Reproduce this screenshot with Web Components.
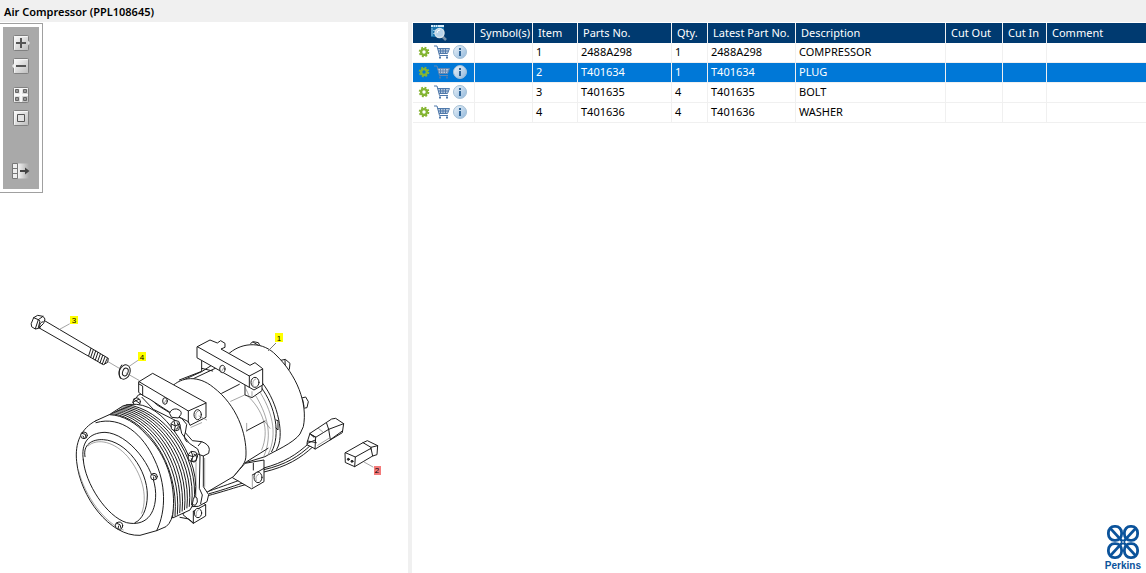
<!DOCTYPE html>
<html lang="en">
<head>
<meta charset="utf-8">
<title>Air Compressor (PPL108645)</title>
<style>
html, body { height: 100%; margin: 0; }
body { font: 11px/20px "Noto Sans", "Open Sans", sans-serif; color: #000; background: #fff; }
</style>
</head>
<body>
<catalog-page>
  <span slot="title">Air Compressor (PPL108645)</span>
  <illustration-pane slot="left"></illustration-pane>
  <parts-list slot="right"></parts-list>
  <brand-mark slot="brand">Perkins</brand-mark>
</catalog-page>
<script>
const define = (name, html, setup) => customElements.define(name, class extends HTMLElement {
  constructor() {
    super();
    this.attachShadow({ mode: 'open' }).innerHTML = html;
    if (setup) setup(this.shadowRoot, this);
  }
});

define('catalog-page', `
<style>
:host { display: flex; flex-direction: column; height: 100%; }
header { background: #f0f0f0; padding: 2px 4px 0; }
h1 { font-size: 11px; line-height: 20px; font-weight: 600; margin: 0; }
main { flex: 1; min-height: 0; display: grid; grid-template-columns: minmax(0, 408fr) 4px minmax(0, 734fr); }
.split { background: #f0f0f0; }
.right { display: flex; flex-direction: column; justify-content: space-between; padding: 1px 0 1px 1px; }
</style>
<header><h1><slot name="title"></slot></h1></header>
<main>
  <slot name="left"></slot>
  <div class="split"></div>
  <div class="right"><slot name="right"></slot><slot name="brand"></slot></div>
</main>`);

define('illustration-pane', `
<style>:host { display: flex; flex-direction: column; overflow: hidden; }</style>
<zoom-tools></zoom-tools>
<part-drawing></part-drawing>`);

const tile = '<rect x="2.500" y="1.500" width="15" height="15" rx="1" fill="url(#g)" stroke="#808080"/><path d="M3.500 15.500V2.500H16.500" fill="none" stroke="#f6f6f6"/>';
const tools = [
  ['Zoom in', tile + '<path d="M17 6.500l2 2.500-2 2.500z" fill="#e0e0e0"/><path d="M10 4v10M5 9h10" stroke="#555" stroke-width="2"/>'],
  ['Zoom out', tile + '<path d="M3 6.500L1 9l2 2.500z" fill="#e8e8e8"/><path d="M5 9h10" stroke="#555" stroke-width="2"/>'],
  ['Fit to window', tile + '<path d="M10 2v14M3 9h14" stroke="#f8f8f8" stroke-width="2"/><path d="M4.500 3.500h3v3h-3zM12.500 3.500h3v3h-3zM4.500 11.500h3v3h-3zM12.500 11.500h3v3h-3z" fill="#999" stroke="#666"/>'],
  ['Actual size', tile + '<path d="M6.500 5.500h7v7h-7z" fill="#e2e2e2" stroke="#555"/>'],
  ['Show list', '<path d="M7 1.500h11v15H7z" fill="url(#f)"/><path d="M1.500 1.500h5v15h-5z" fill="#eee" stroke="#777"/><path d="M2 6.500h5M2 11.500h5" stroke="#777"/><path d="M9 9h7" stroke="#444" stroke-width="2"/><path d="M14 5.500L18.500 9 14 12.500z" fill="#444"/>']
];
define('zoom-tools', `
<style>
:host { display: block; flex: none; box-sizing: border-box; width: 43px; border: 1px solid #a0a0a0; border-left: 0; margin-top: 1px; padding: 3px; background: #fff; }
nav { background: #a9a9a9; display: flex; flex-direction: column; align-items: center; gap: 5px; padding: 7px 0 8px; height: 147px; }
button { border: 0; padding: 0; background: none; width: 20px; height: 18px; display: block; }
button:nth-child(3) { margin-top: 6px; }
button:nth-child(5) { margin-top: 30px; }
svg { display: block; }
</style>
<nav>${tools.map(([n, p]) => `<button type="button" aria-label="${n}"><svg width="20" height="18" viewBox="0 0 20 18"><defs><linearGradient id="g" x2="1" y2="1"><stop stop-color="#fff"/><stop offset="1" stop-color="#bbb"/></linearGradient><linearGradient id="f"><stop stop-color="#f4f4f4"/><stop offset="1" stop-color="#a9a9a9"/></linearGradient></defs>${p}</svg></button>`).join('')}</nav>`);

define('part-drawing', `
<style>
:host { display: block; }
svg { display: block; width: 100%; height: auto; }
g { fill: #fff; stroke: #1c1c1c; stroke-width: 3; stroke-linejoin: round; stroke-linecap: round; }
.n { fill: none; } .l { fill: none; stroke: #777; stroke-width: 2; } .d { fill: #333; }
text { font: 8px "Liberation Sans", sans-serif; text-anchor: middle; fill: #000; }
</style>
<svg viewBox="0 193 408 380" role="img" aria-label="Air compressor exploded view">
  <!-- rear housing -->
  <g transform="translate(130 330) scale(.33333)">
    <path d="M362 40l8-5 15 3 5 10M448 92l18-4 14 12-2 18-12 5M512 205l15-4 8 14-4 18-12 2"/>
    <path d="M455 96l10 12M465 90l1 28M518 209l4 20M369 36l16 10"/>
    <path d="M300 68C340 35 400 35 438 75C500 135 534 220 520 290L510 312C490 340 430 365 405 380L340 400L300 300L160 150L215 125L270 90z"/>
    <path class="n" d="M398 160C445 220 465 320 440 358M392 170C438 230 452 315 425 365M438 270l6 2 0 28-6-6"/>
    <path class="l" d="M386 180C425 240 445 310 415 372M374 192C410 250 430 312 402 378M350 195C400 240 420 300 395 360"/>
    <path class="n" d="M148 150L215 124V92M190 146L258 114M215 115L248 123M275 190L328 163M350 302L405 273M350 395L414 355"/>
    <path class="l" d="M302 214L346 194M240 104L275 124M350 304l0-24M405 275l15 20"/>
    <path d="M345 165V195L366 203L396 182V165z"/><path class="l" d="M345 172C355 190 355 195 358 200M366 185V202"/>
    <path d="M202 50L240 30 262 39 272 32 285 40V52L273 57 360 106 375 98 398 116V165L372 180 358 172 202 84z"/>
    <path class="n" d="M202 50L358 138L398 117M358 138V172"/>
    <ellipse cx="277" cy="117" rx="8" ry="11"/><ellipse cx="375" cy="157" rx="12" ry="15"/><path class="l" d="M369 167q-3-17 8-20M282 112l-8 14"/>
  </g>
  <!-- harness, lower lug and connectors -->
  <g transform="translate(190 400) scale(.33333)">
    <path class="n" d="M55 274C100 258 130 248 160 236M58 281C105 268 140 255 170 245M50 288C100 275 130 264 180 250M218 205C285 187 318 165 359 128M222 209C290 193 325 170 364 134M222 216C290 200 332 175 370 139"/>
    <path d="M128 232L165 190L222 180V245L186 266z"/><path class="n" d="M187 225L222 205M190 190V210"/>
    <ellipse cx="204" cy="232" rx="12" ry="16"/><path class="l" d="M199 243q-5-16 7-20M187 225V262"/>
    <path d="M352 125L360 100 425 57 437 55 461 71 457 98 376 147 363 140 352 135z"/>
    <path class="n" d="M360 101L377 112 375 147M377 112L416 88 461 71M416 88L421 119M360 101L372 112M353 123L379 128M365 105l12 6M352 130l24-10M416 88l-6-18M421 119l36-26"/>
    <path class="l" d="M383 136L420 113M385 85l15 12"/>
    <path d="M466 158L519 128 532 122 563 137 561 164 548 168 494 200 467 188z"/>
    <path class="n" d="M466 158L496 171L494 200M496 171L543 145L548 168M519 128L543 142L563 137M543 142V148"/>
    <circle class="d" cx="475" cy="178" r="3"/><circle class="d" cx="486" cy="184" r="3"/>
    <path class="l" d="M522 186L549 201"/>
  </g>
  <!-- front housing -->
  <g transform="translate(130 330) scale(.33333)">
    <path d="M125 170C155 140 205 135 250 172C320 225 350 310 348 375C347 400 340 403 310 440L225 490L150 350z"/>
  </g>
  <!-- flange and pulley -->
  <g transform="translate(60 380) scale(.33333)">
    <path d="M370 405L400 430 437 408V374L400 350z"/><path class="n" d="M400 394V430M400 394L437 374M360 412l26 5 12 10"/>
    <ellipse cx="414" cy="399" rx="11" ry="14"/><path class="l" d="M409 408q-3-15 7-19"/>
    <path d="M222 62L235 45Q250 38 265 50L290 74 345 108 365 115 380 133 376 158 397 182 425 185Q447 193 448 208L446 220 430 228V320L446 344 441 365 415 379 395 380 330 350z"/>
    <path class="n" d="M246 52L280 88 340 118 358 128 365 160 388 190 413 207 420 228 418 325 427 345 422 371M430 228L413 222M376 158q-8 15 5 28M425 185l-10 12"/>
    <path class="l" d="M434 235V320M408 220V350"/>
    <circle cx="230" cy="65" r="11"/><path class="n" d="M222 58l18 13M218 67l18-9"/>
    <path d="M148 104L190 77Q270 55 337 145Q430 270 400 372L390 390 338 414 250 250z"/>
    <g id="grooves" class="n"></g>
    <path d="M108 122L148 104C190 105 230 130 260 165C320 225 345 310 340 385Q338 425 318 440L290 452 240 466C150 470 60 350 50 245C44 190 62 145 108 122z"/>
    <path class="n" d="M108 128C185 105 250 165 284 240C317 310 320 390 290 452M70 240C62 190 85 158 135 157C205 160 285 260 287 340C288 405 255 440 200 428C140 410 75 310 70 240zM75 230C68 195 95 177 130 179C200 183 262 270 262 345C262 390 245 420 225 428"/>
    <path class="l" d="M84 198C112 172 165 186 203 230C243 278 266 345 245 400M55 270C75 350 135 430 190 450"/>
    <g><circle cx="72" cy="166" r="10"/><circle cx="282" cy="290" r="10"/><circle cx="177" cy="437" r="11"/><path class="n" d="M66 160l10 3 2 10M69 168l3 5M276 284l10 3 3 9M281 291l0 7M170 430l10 4 3 10M176 438l-2 8"/></g>
    <g><path d="M334 130l8-9 14 3 4 12-4 14-12 3-9-6zM385 224l8-10 14 2 6 12-5 14-12 3-10-6zM400 358l4-9 7 5 1 12-6 10-8-2z"/><path class="n" d="M342 124l4 14-3 14M334 132l12 6 12-6M394 216l5 13-4 14M386 226l13 4 11-6M402 222a8 12 0 1 1-8 14M352 128a7 11 0 0 1-4 20"/></g>
  </g>
  <!-- front bracket -->
  <g transform="translate(130 330) scale(.33333)">
    <path d="M27 155L68 130 228 218V262L180 286 175 275 120 247 60 208 38 196 27 188z"/>
    <path class="n" d="M27 155L175 243L228 219M175 243V278M27 162L38 168V196"/>
    <ellipse cx="105" cy="213" rx="7" ry="10"/><path class="l" d="M110 208l-8 12"/>
    <path d="M119 249Q124 235 140 237Q157 242 153 253L145 264 126 262z"/>
    <ellipse cx="203" cy="254" rx="11" ry="15"/><path class="l" d="M198 264q-4-18 7-21M207 258L230 270M183 292L215 278"/>
  </g>
  <!-- bolt and washer -->
  <g transform="translate(20 305) scale(.33333)">
    <path d="M67 43L265 160 263 172 250 179 56 68z"/>
    <path d="M34 55L41 38 53 31 69 34 75 42 71 55 56 70 46 72 36 66z"/><path class="n" d="M41 38L55 44 69 34M55 44L46 71M55 44l5 4-5 20M69 50q-14 3-9 20"/>
    <path class="n" d="M213 130l-7 22M220 134l-8 23M227 138l-8 23M234 142l-8 23M241 147l-8 22M248 151l-8 23M255 155l-8 22M262 160l-8 17"/>
    <ellipse cx="314" cy="201" rx="16" ry="22" transform="rotate(20 314 201)"/><path class="n" d="M305 180q-14 18-4 40"/>
    <ellipse cx="316" cy="201" rx="8" ry="12" transform="rotate(20 316 201)"/>
    <path class="l" d="M117 74L148 57M329 183L354 166M264 170L298 190M318 204L357 226"/>
  </g>
  <path d="M268 351L276 343" stroke="#777"/>
  <rect x="70" y="316" width="8" height="8" fill="#ff0"/><text x="74" y="323">3</text>
  <rect x="138" y="352" width="8" height="9" fill="#ff0"/><text x="142" y="360">4</text>
  <rect x="275" y="333" width="8" height="9" fill="#ff0"/><text x="279" y="341">1</text>
  <rect x="374" y="466" width="7" height="9" fill="#f47a7a"/><text x="377" y="473">2</text>
</svg>`, root => {
  // pulley belt grooves, interpolated from the front rim to the flange
  let d = '';
  for (let i = 0; i < 10; i++) {
    const t = i / 9, m = (a, b) => (a + (b - a) * t).toFixed(1);
    d += `M${m(150, 200)} ${m(104, 74)}C${m(250, 305)} ${m(115, 85)} ${m(350, 420)} ${m(255, 220)} ${m(338, 402)} ${m(412, 370)}`;
  }
  root.getElementById('grooves').innerHTML = `<path class="n" d="${d}"/>`;
});

const gear = '<svg width="12" height="12" viewBox="0 0 12 12"><circle cx="6" cy="6" r="4.400" fill="none" stroke="#86b32f" stroke-width="1.800" stroke-dasharray="1.900 1.556"/><circle cx="6" cy="6" r="2.900" fill="none" stroke="#84b533" stroke-width="2.400"/></svg>';
const cart = '<svg class="cart" width="16" height="14" viewBox="0 0 16 14"><path d="M3.500 3.500h11.500l-1.500 5H5z" fill="#b9cbe0" stroke="none"/><path d="M0 1h3l2.500 9.500H14M3.500 3.500h12l-2 5H5M4 6h10.500M6.500 3.500v5M9 3.500v5M11.500 3.500v5" fill="none"/><path d="M5 11.500h2v2H5zM12 11.500h2v2h-2z" stroke="none" fill="#4f79ab"/></svg>';
const info = '<svg width="14" height="14" viewBox="0 0 14 14"><defs><linearGradient id="i" x2="1" y2="1"><stop stop-color="#eef5fb"/><stop offset="1" stop-color="#8fb6da"/></linearGradient></defs><circle cx="7" cy="7" r="6.500" fill="url(#i)" stroke="#a3bfd6"/><path d="M6 3h2v2H6zM6 6h2v5H6z" fill="#2c6396"/></svg>';
const rows = [['1', '2488A298', '1', '2488A298', 'COMPRESSOR'], ['2', 'T401634', '1', 'T401634', 'PLUG'], ['3', 'T401635', '4', 'T401635', 'BOLT'], ['4', 'T401636', '4', 'T401636', 'WASHER']];
define('parts-list', `
<style>
:host { display: block; }
table { width: 100%; table-layout: fixed; border-collapse: separate; border-spacing: 0; }
th, td { box-sizing: border-box; height: 20px; line-height: 18px; vertical-align: top; padding: 0 0 0 3px; text-align: left; font-weight: 400; white-space: nowrap; overflow: hidden; border-right: 1px solid #f0f0f0; }
td { border-bottom: 1px solid #f0f0f0; }
th { background: #003a70; color: #fff; padding-left: 5px; line-height: 20px; }
th:last-child, td:last-child { border-right: 0; }
.on td { background: #0078d7; color: #fff; }
.act { display: flex; align-items: center; padding-left: 2px; height: 18px; }
button { border: 0; padding: 0; background: none; display: block; }
button + button { margin-left: 4px; }
button + button + button { margin-left: 3px; }
svg { display: block; }
.cart { stroke: #4f79ab; }
.on .cart { stroke: #6688b0; }
th button { margin-left: 12px; }
</style>
<table>
<colgroup>${[62, 58, 45, 94, 36, 88, 150, 57, 44].map(w => `<col style="width:${w}px">`).join('')}<col></colgroup>
<thead><tr><th scope="col"><button type="button" aria-label="Search parts"><svg width="18" height="18" viewBox="0 0 18 18"><path d="M1 2h13v12H1z" fill="#1873ad"/><path d="M1 2h13v2H1z" fill="#d8ecf8"/><path d="M3 3h1M5 3h1M7 3h1" stroke="#1873ad"/><path d="M2 5v8M3 7.500h2M3 10.500h2" stroke="#8cc0e0"/><path d="M12 13l4 4" stroke="#7891a8" stroke-width="2.500"/><circle cx="9.500" cy="10" r="4.500" fill="#b9d3e8" stroke="#d6e2ea" stroke-width="1.500"/><path d="M7 10q0-3 3-3" stroke="#fff" fill="none"/></svg></button></th>${['Symbol(s)', 'Item', 'Parts No.', 'Qty.', 'Latest Part No.', 'Description', 'Cut Out', 'Cut In', 'Comment'].map(t => `<th scope="col">${t}</th>`).join('')}</tr></thead>
<tbody>${rows.map((r, n) => `<tr${n === 1 ? ' class="on" aria-selected="true"' : ''}><td><div class="act"><button type="button" aria-label="Options">${gear}</button><button type="button" aria-label="Add to cart">${cart}</button><button type="button" aria-label="Part information">${info}</button></div></td><td></td>${r.map(t => `<td>${t}</td>`).join('')}<td></td><td></td><td></td></tr>`).join('')}</tbody>
</table>`);

define('brand-mark', `
<style>
:host { display: flex; flex-direction: column; align-items: center; align-self: flex-end; margin-right: 5px; font: bold 10px/12px "Liberation Sans", sans-serif; color: #0b539b; }
svg { display: block; }
</style>
<svg width="34" height="36" viewBox="0 0 34 36" aria-hidden="true"><g fill="none" stroke="#0b539b" stroke-width="2.800">
<g id="q"><rect x="2.400" y="2.400" width="13.200" height="14" rx="6" ry="6.400"/><path d="M4.500 4.500L16.500 17.500" stroke-width="2.600"/></g>
<use href="#q" transform="matrix(-1 0 0 1 34 0)"/><use href="#q" transform="matrix(1 0 0 -1 0 36)"/><use href="#q" transform="matrix(-1 0 0 -1 34 36)"/></g></svg>
<slot></slot>`);
</script>
</body>
</html>
